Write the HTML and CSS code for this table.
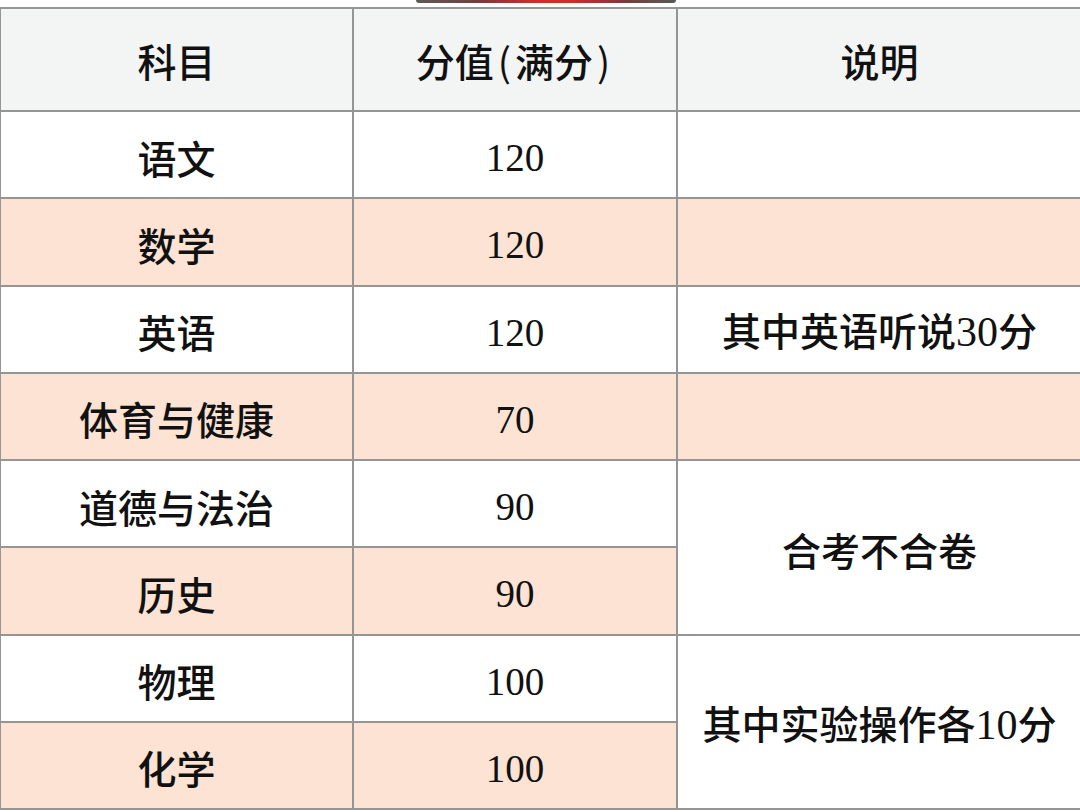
FILE: index.html
```html
<!DOCTYPE html>
<html lang="zh-CN">
<head>
<meta charset="utf-8">
<title>分值表</title>
<link rel="stylesheet" href="styles.css">
</head>
<body>
<div class="topbar"><div class="tab-edge"></div></div>
<table class="score">
  <colgroup>
    <col class="c1"><col class="c2"><col class="c3">
  </colgroup>
  <thead>
    <tr class="head"><th>科目</th><th>分值<span class="paren">(</span>满分<span class="paren">)</span></th><th>说明</th></tr>
  </thead>
  <tbody>
    <tr class="w"><td>语文</td><td class="num">120</td><td></td></tr>
    <tr class="p"><td>数学</td><td class="num">120</td><td></td></tr>
    <tr class="w"><td>英语</td><td class="num">120</td><td>其中英语听说<span class="num">30</span>分</td></tr>
    <tr class="p"><td>体育与健康</td><td class="num">70</td><td></td></tr>
    <tr class="w"><td>道德与法治</td><td class="num">90</td><td rowspan="2" class="merged">合考不合卷</td></tr>
    <tr class="p"><td>历史</td><td class="num">90</td></tr>
    <tr class="w"><td>物理</td><td class="num">100</td><td rowspan="2" class="merged">其中实验操作各<span class="num">10</span>分</td></tr>
    <tr class="p"><td>化学</td><td class="num">100</td></tr>
  </tbody>
</table>
</body>
</html>
```

FILE: styles.css
```css
html, body {
  margin: 0;
  padding: 0;
  background: #ffffff;
}
body {
  width: 1080px;
  height: 812px;
  overflow: hidden;
  font-family: "Noto Sans CJK SC", "Liberation Serif", serif;
  color: #111111;
}
.topbar {
  height: 7px;
}
.tab-edge {
  margin-left: 416px;
  width: 260px;
  height: 3px;
  border-radius: 0 0 40px 40px;
  background: linear-gradient(90deg, #5a5a5a 0%, #7a3a3a 25%, #d42a2a 45%, #d42a2a 60%, #7a3a3a 80%, #5a5a5a 100%);
}
.score {
  border-collapse: collapse;
  width: 1082px;
  margin-left: -1px;
  table-layout: fixed;
}
.c1 { width: 353px; }
.c2 { width: 324px; }
.c3 { width: 405px; }
.score th, .score td {
  border: 2px solid #959595;
  text-align: center;
  vertical-align: middle;
  padding: 5px 0 0;
  font-size: 39px;
  font-weight: 500;
  line-height: 1;
  white-space: nowrap;
  box-sizing: border-box;
}
.head th {
  height: 103px;
  background: #f3f4f4;
  padding-top: 1px;
}
.score tbody td {
  height: 87.25px;
}
.w td { background: #ffffff; }
.p td { background: #fce3d3; }
.score td.merged { background: #ffffff; }
.num {
  font-family: "Liberation Serif", serif;
  font-size: 42px;
  font-weight: 400;
}
.score td.num {
  padding-top: 6px;
}
.paren {
  display: inline-block;
  margin: 0 4px;
  font-weight: 400;
}
```
